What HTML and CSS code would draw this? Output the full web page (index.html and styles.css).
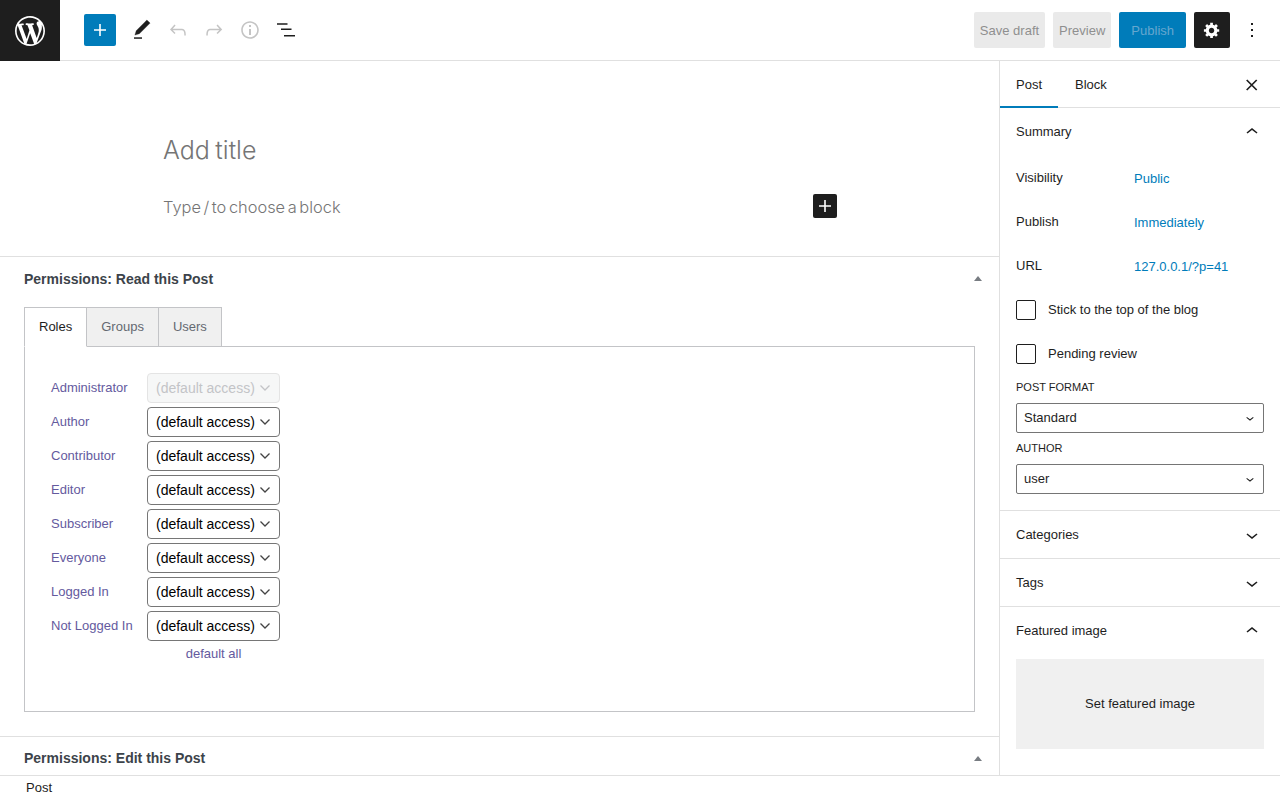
FILE: index.html
```html
<!DOCTYPE html>
<html lang="en">
<head>
<meta charset="utf-8">
<title>Add New Post</title>
<link rel="stylesheet" href="styles.css">
</head>
<body>
<header class="topbar">
  <a class="wp-logo"><svg viewBox="0 0 20 20" width="30" height="30"><path fill="#fff" d="M20 10c0-5.51-4.49-10-10-10C4.48 0 0 4.49 0 10c0 5.52 4.48 10 10 10 5.51 0 10-4.48 10-10zM7.78 15.37L4.37 6.22c.55-.02 1.17-.08 1.17-.08.5-.06.44-1.13-.06-1.11 0 0-1.45.11-2.37.11-.18 0-.37 0-.58-.01C4.12 2.69 6.87 1.11 10 1.11c2.33 0 4.45.87 6.05 2.34-.68-.11-1.65.39-1.65 1.58 0 .74.45 1.36.9 2.1.35.61.55 1.36.55 2.46 0 1.49-1.4 5-1.4 5l-3.03-8.37c.54-.02.82-.17.82-.17.5-.05.44-1.25-.06-1.22 0 0-1.44.12-2.38.12-.87 0-2.33-.12-2.33-.12-.5-.03-.56 1.2-.06 1.22l.92.08 1.26 3.41zM17.41 10c.24-.64.74-1.87.43-4.25.7 1.29 1.05 2.71 1.05 4.25 0 3.29-1.73 6.24-4.4 7.78.97-2.59 1.94-5.2 2.92-7.78zM6.1 18.09C3.12 16.65 1.11 13.53 1.11 10c0-1.3.23-2.48.72-3.59C3.25 10.3 4.67 14.2 6.1 18.09zm4.03-6.63l2.58 6.98c-.86.29-1.76.45-2.71.45-.79 0-1.57-.11-2.29-.33.81-2.38 1.62-4.74 2.42-7.1z"/></svg></a>
  <div class="tools">
    <button class="inserter"><svg viewBox="0 0 24 24" width="24" height="24"><path fill="#fff" d="M18 11.2h-5.2V6h-1.6v5.2H6v1.6h5.2V18h1.6v-5.2H18z"/></svg></button>
    <span class="tool"><svg viewBox="0 0 24 24" width="24" height="24"><path fill="#1e1e1e" stroke="#1e1e1e" stroke-width=".3" d="M20.1 5.1L16.9 2 6.2 12.7l-1.3 4.4 4.5-1.3L20.1 5.1z"/><path fill="#1e1e1e" d="M4 20.8h8v-1.5H4v1.5z"/></svg></span>
    <span class="tool"><svg viewBox="0 0 24 24" width="24" height="24"><path fill="#c4c4c4" d="M18.3 11.7c-.6-.6-1.4-.9-2.3-.9H6.7l2.9-3.3-1.1-1-4.5 5L8.5 16l1-1-2.7-2.7H16c.5 0 .9.2 1.3.5 1 1 1 3.4 1 4.5v.3h1.5v-.2c0-1.5 0-4.3-1.5-5.7z"/></svg></span>
    <span class="tool"><svg viewBox="0 0 24 24" width="24" height="24"><path fill="#c4c4c4" d="M15.6 6.5l-1.1 1 2.9 3.3H8c-.9 0-1.7.3-2.3.9-1.4 1.5-1.4 4.2-1.4 5.6v.2h1.5v-.3c0-1.1 0-3.5 1-4.5.3-.3.7-.5 1.3-.5h9.2L14.5 15l1.1 1.1 4.6-4.6-4.6-5z"/></svg></span>
    <span class="tool"><svg viewBox="0 0 24 24" width="24" height="24"><path fill="#c4c4c4" d="M12 3.2c-4.8 0-8.8 3.9-8.8 8.8 0 4.8 3.9 8.8 8.8 8.8 4.8 0 8.8-3.9 8.8-8.8 0-4.8-4-8.8-8.8-8.8zm0 16c-4 0-7.2-3.3-7.2-7.2C4.8 8 8 4.8 12 4.8s7.2 3.3 7.2 7.2c0 4-3.2 7.2-7.2 7.2zM11 17h2v-6h-2v6zm0-8h2V7h-2v2z"/></svg></span>
    <span class="tool"><svg viewBox="0 0 24 24" width="24" height="24"><path fill="#1e1e1e" d="M3 5.200h10.500v1.600H3zM7 10.500h10.500v1.600H7zM10 16.900h11v1.600H10z"/></svg></span>
  </div>
  <div class="actions">
    <button class="btn btn-grey btn-save">Save draft</button>
    <button class="btn btn-grey btn-preview">Preview</button>
    <button class="btn btn-publish">Publish</button>
    <button class="btn-settings"><svg viewBox="0 0 20 20" width="18" height="18"><path fill="#fff" d="M18 12h-2.180c-.17.7-.44 1.350-.81 1.930l1.540 1.540-2.100 2.100-1.540-1.540c-.58.36-1.230.63-1.910.79V19H8v-2.180c-.68-.16-1.330-.43-1.910-.79l-1.540 1.540-2.120-2.120 1.540-1.540c-.36-.58-.63-1.230-.79-1.910H1V9.030h2.170c.16-.7.44-1.350.8-1.940L2.430 5.550l2.100-2.100 1.540 1.540c.58-.37 1.240-.64 1.930-.81V2h3v2.180c.68.16 1.330.43 1.910.79l1.540-1.540 2.120 2.120-1.540 1.540c.36.59.64 1.240.8 1.940H18V12zm-8.500 1.500c1.660 0 3-1.340 3-3s-1.340-3-3-3-3 1.340-3 3 1.340 3 3 3z"/></svg></button>
    <span class="more"><svg viewBox="0 0 24 24" width="24" height="24"><path fill="#1e1e1e" d="M13 19h-2v-2h2v2zm0-6h-2v-2h2v2zm0-6h-2V5h2v2z"/></svg></span>
  </div>
</header>

<div class="layout">
  <main class="content">
    <section class="editor">
      <div class="canvas">
        <h1 class="post-title">Add title</h1>
        <div class="block-row">
          <p class="block-hint">Type / to choose a block</p>
          <button class="block-add"><svg viewBox="0 0 24 24" width="24" height="24"><path fill="#fff" d="M18 11.200h-5.200V6h-1.600v5.200H6v1.600h5.200V18h1.600v-5.200H18z"/></svg></button>
        </div>
      </div>
    </section>

    <section class="metabox metabox-first">
      <div class="metabox-head">
        <h2 class="metabox-title">Permissions: Read this Post</h2>
        <span class="caret-up"></span>
      </div>
      <div class="metabox-body">
        <div class="tabs">
          <span class="tab tab-active">Roles</span>
          <span class="tab">Groups</span>
          <span class="tab">Users</span>
        </div>
        <div class="tab-panel">
          <div class="role-grid">
            <label class="role-label">Administrator</label>
            <select class="role-select" disabled><option>(default access)</option></select>
            <label class="role-label">Author</label>
            <select class="role-select"><option>(default access)</option></select>
            <label class="role-label">Contributor</label>
            <select class="role-select"><option>(default access)</option></select>
            <label class="role-label">Editor</label>
            <select class="role-select"><option>(default access)</option></select>
            <label class="role-label">Subscriber</label>
            <select class="role-select"><option>(default access)</option></select>
            <label class="role-label">Everyone</label>
            <select class="role-select"><option>(default access)</option></select>
            <label class="role-label">Logged In</label>
            <select class="role-select"><option>(default access)</option></select>
            <label class="role-label">Not Logged In</label>
            <select class="role-select"><option>(default access)</option></select>
            <a class="default-all">default all</a>
          </div>
        </div>
      </div>
    </section>

    <section class="metabox metabox-next">
      <div class="metabox-head">
        <h2 class="metabox-title">Permissions: Edit this Post</h2>
        <span class="caret-up"></span>
      </div>
    </section>
  </main>

  <aside class="sidebar">
    <div class="side-tabs">
      <span class="side-tab side-tab-active">Post</span>
      <span class="side-tab side-tab-block">Block</span>
      <span class="side-close"><svg viewBox="0 0 24 24" width="24" height="24"><path fill="none" stroke="#1e1e1e" stroke-width="1.700" d="M6.700 7l10 10M16.700 7l-10 10"/></svg></span>
    </div>

    <section class="panel panel-summary">
      <div class="panel-head">
        <span class="panel-name">Summary</span>
        <svg class="chev" viewBox="0 0 24 24" width="24" height="24"><path fill="#1e1e1e" d="M6.500 12.400L12 8l5.500 4.400-.9 1.200L12 10l-4.500 3.600-1-1.200z"/></svg>
      </div>
      <div class="summary-body">
        <div class="sum-row"><span class="sum-key">Visibility</span><a class="sum-val">Public</a></div>
        <div class="sum-row"><span class="sum-key">Publish</span><a class="sum-val">Immediately</a></div>
        <div class="sum-row"><span class="sum-key">URL</span><a class="sum-val">127.0.0.1/?p=41</a></div>
        <div class="check-row check-first"><span class="check"></span><span>Stick to the top of the blog</span></div>
        <div class="check-row"><span class="check"></span><span>Pending review</span></div>
        <div class="field-label field-first">POST FORMAT</div>
        <select class="side-select"><option>Standard</option></select>
        <div class="field-label">AUTHOR</div>
        <select class="side-select"><option>user</option></select>
      </div>
    </section>

    <section class="panel">
      <div class="panel-head">
        <span class="panel-name">Categories</span>
        <svg class="chev" viewBox="0 0 24 24" width="24" height="24"><path fill="#1e1e1e" d="M17.500 11.600L12 16l-5.500-4.400.9-1.200L12 14l4.500-3.600 1 1.200z"/></svg>
      </div>
    </section>
    <section class="panel">
      <div class="panel-head">
        <span class="panel-name">Tags</span>
        <svg class="chev" viewBox="0 0 24 24" width="24" height="24"><path fill="#1e1e1e" d="M17.500 11.600L12 16l-5.500-4.400.9-1.200L12 14l4.500-3.600 1 1.200z"/></svg>
      </div>
    </section>
    <section class="panel panel-last">
      <div class="panel-head">
        <span class="panel-name">Featured image</span>
        <svg class="chev" viewBox="0 0 24 24" width="24" height="24"><path fill="#1e1e1e" d="M6.500 12.400L12 8l5.500 4.400-.9 1.200L12 10l-4.500 3.600-1-1.200z"/></svg>
      </div>
      <div class="featured-wrap"><button class="featured">Set featured image</button></div>
    </section>
  </aside>
</div>

<footer class="statusbar">Post</footer>
</body>
</html>
```

FILE: styles.css
```css
* { box-sizing: border-box; }
html, body { height: 100%; }
body {
  margin: 0;
  height: 800px;
  overflow: hidden;
  display: flex;
  flex-direction: column;
  background: #fff;
  color: #1e1e1e;
  font: 13px/1.4 "Liberation Sans", Arial, sans-serif;
}
button { font-family: inherit; border: 0; padding: 0; }

/* top bar */
.topbar {
  flex: 0 0 61px;
  display: flex;
  align-items: stretch;
  border-bottom: 1px solid #e0e0e0;
}
.wp-logo {
  width: 60px;
  height: 61px;
  margin-bottom: -1px;
  background: #1e1e1e;
  display: flex;
  align-items: center;
  justify-content: center;
}
.tools { display: flex; align-items: center; padding-left: 24px; }
.inserter {
  width: 32px;
  height: 32px;
  background: #007cba;
  border-radius: 2px;
  display: flex;
  align-items: center;
  justify-content: center;
  margin-right: 8px;
}
.tool { width: 36px; height: 36px; display: flex; align-items: center; justify-content: center; }
.actions {
  margin-left: auto;
  display: flex;
  align-items: center;
  gap: 8px;
  padding-right: 16px;
}
.btn { height: 36px; border-radius: 2px; font-size: 13px; padding: 0 6px; }
.btn-grey { background: #eaeaea; color: #8f8f8f; }
.btn-publish { background: #007cba; color: #66a7cf; padding: 0 12px; }
.btn-settings {
  width: 36px;
  height: 36px;
  background: #1e1e1e;
  border-radius: 2px;
  display: flex;
  align-items: center;
  justify-content: center;
}
.more { width: 24px; height: 24px; margin-left: 2px; }

/* main layout */
.layout { flex: 1 1 auto; min-height: 0; display: flex; }
.content { flex: 1 1 auto; min-width: 0; overflow: hidden; }
.sidebar {
  flex: 0 0 281px;
  border-left: 1px solid #e0e0e0;
  overflow: hidden;
}

/* editor canvas */
.editor { height: 195px; display: flex; justify-content: center; }
.canvas { width: 674px; margin-left: 1px; padding-top: 70px; }
.post-title {
  margin: 0;
  height: 38px;
  font: 300 25px/38px Inter, "Liberation Sans", sans-serif;
  word-spacing: -1.500px;
  color: #757575;
}
.block-row {
  display: flex;
  justify-content: space-between;
  align-items: center;
  margin-top: 25px;
  height: 24px;
}
.block-hint {
  margin: 1px 0 0;
  font: 300 16.400px/24px Inter, "Liberation Sans", sans-serif;
  word-spacing: -2px;
  color: #757575;
}
.block-add {
  width: 24px;
  height: 24px;
  background: #1e1e1e;
  border-radius: 2px;
  display: flex;
}

/* meta boxes */
.metabox { border-top: 1px solid #e0e0e0; }
.metabox-head {
  height: 44px;
  padding: 0 16px 0 24px;
  display: flex;
  align-items: center;
  justify-content: space-between;
}
.metabox-first .metabox-head { padding-top: 2px; }
.metabox-title { margin: 0; font-size: 14px; font-weight: 700; color: #3c434a; }
.caret-up {
  width: 0;
  height: 0;
  border-left: 4px solid transparent;
  border-right: 4px solid transparent;
  border-bottom: 5px solid #787c82;
  margin: 0 1px 4px 0;
}
.metabox-next .caret-up { margin-bottom: 2px; }
.metabox-body { padding: 6px 24px 24px; }
.tabs { display: flex; position: relative; z-index: 1; }
.tab {
  height: 40px;
  padding: 0 14px;
  display: flex;
  align-items: center;
  background: #f0f0f0;
  color: #646970;
  border: 1px solid #c3c4c7;
  border-left: 0;
}
.tab-active {
  background: #fff;
  color: #1e1e1e;
  border-left: 1px solid #c3c4c7;
  border-bottom-color: #fff;
}
.tab-panel {
  height: 366px;
  margin-top: -1px;
  border: 1px solid #c3c4c7;
  padding: 26px 26px;
}
.role-grid {
  display: grid;
  grid-template-columns: 96px 133px;
  row-gap: 4px;
  align-items: center;
}
.role-label { color: #645a9e; }
.role-select {
  width: 133px;
  height: 30px;
  font: 14px "Liberation Sans", Arial, sans-serif;
  color: #000;
  appearance: none;
  background: #fff url("data:image/svg+xml,%3Csvg xmlns='http://www.w3.org/2000/svg' viewBox='0 0 10 6'%3E%3Cpath fill='none' stroke='%23444' stroke-width='1.300' d='M.5 .5L5 5l4.500-4.500'/%3E%3C/svg%3E") no-repeat right 9px center / 10px 6px;
  border: 1px solid #767676;
  border-radius: 4px;
  padding: 0 8px;
}
.role-select:disabled {
  color: #c3c4c7;
  background-color: #f6f7f7;
  background-image: url("data:image/svg+xml,%3Csvg xmlns='http://www.w3.org/2000/svg' viewBox='0 0 10 6'%3E%3Cpath fill='none' stroke='%23c3c4c7' stroke-width='1.300' d='M.5 .5L5 5l4.500-4.500'/%3E%3C/svg%3E");
  border-color: #e4e4e4;
  opacity: 1;
}
.default-all { grid-column: 2; text-align: center; color: #645a9e; }

/* sidebar */
.side-tabs {
  height: 47px;
  display: flex;
  align-items: stretch;
  border-bottom: 1px solid #e0e0e0;
}
.side-tab { padding: 2px 16px 0; display: flex; align-items: center; margin-bottom: -1px; }
.side-tab-block { margin-left: 1px; }
.side-tab-active { border-bottom: 2px solid #007cba; padding-top: 3px; }
.side-close { margin-left: auto; margin-right: 16px; align-self: center; height: 24px; margin-top: 1px; }
.panel { border-bottom: 1px solid #e0e0e0; }
.panel-last { border-bottom: 0; }
.panel-head {
  height: 47px;
  padding: 0 16px;
  display: flex;
  align-items: center;
  justify-content: space-between;
}
.panel-name { margin-top: 2px; }
.summary-body { padding: 2px 16px 16px; }
.sum-row { height: 44px; display: flex; align-items: center; }
.sum-key { width: 118px; margin-top: -2px; }
.sum-val { color: #007cba; }
.check-row { height: 44px; display: flex; align-items: center; gap: 12px; }
.check-first { margin-top: -1px; }
.check {
  width: 20px;
  height: 20px;
  border: 1px solid #1e1e1e;
  border-radius: 2px;
}
.field-label { font-size: 11px; height: 31px; display: flex; align-items: center; }
.field-first { height: 22px; margin-bottom: 5px; padding-top: 2px; }
.side-select {
  display: block;
  width: 248px;
  height: 30px;
  font: 13px "Liberation Sans", Arial, sans-serif;
  color: #1e1e1e;
  appearance: none;
  background: #fff url("data:image/svg+xml,%3Csvg xmlns='http://www.w3.org/2000/svg' viewBox='0 0 24 24'%3E%3Cpath fill='%231e1e1e' d='M17.500 11.600L12 16l-5.500-4.400.9-1.200L12 14l4.500-3.600 1 1.200z'/%3E%3C/svg%3E") no-repeat right 5px center / 16px;
  border: 1px solid #757575;
  border-radius: 2px;
  padding: 0 7px 2px;
}
.featured-wrap { padding: 5px 16px 0; }
.featured {
  display: block;
  width: 248px;
  height: 90px;
  padding-bottom: 2px;
  background: #f0f0f0;
  color: #1e1e1e;
  font-size: 13px;
}

/* status bar */
.statusbar {
  flex: 0 0 25px;
  border-top: 1px solid #e0e0e0;
  padding-left: 26px;
  line-height: 23px;
}
```
